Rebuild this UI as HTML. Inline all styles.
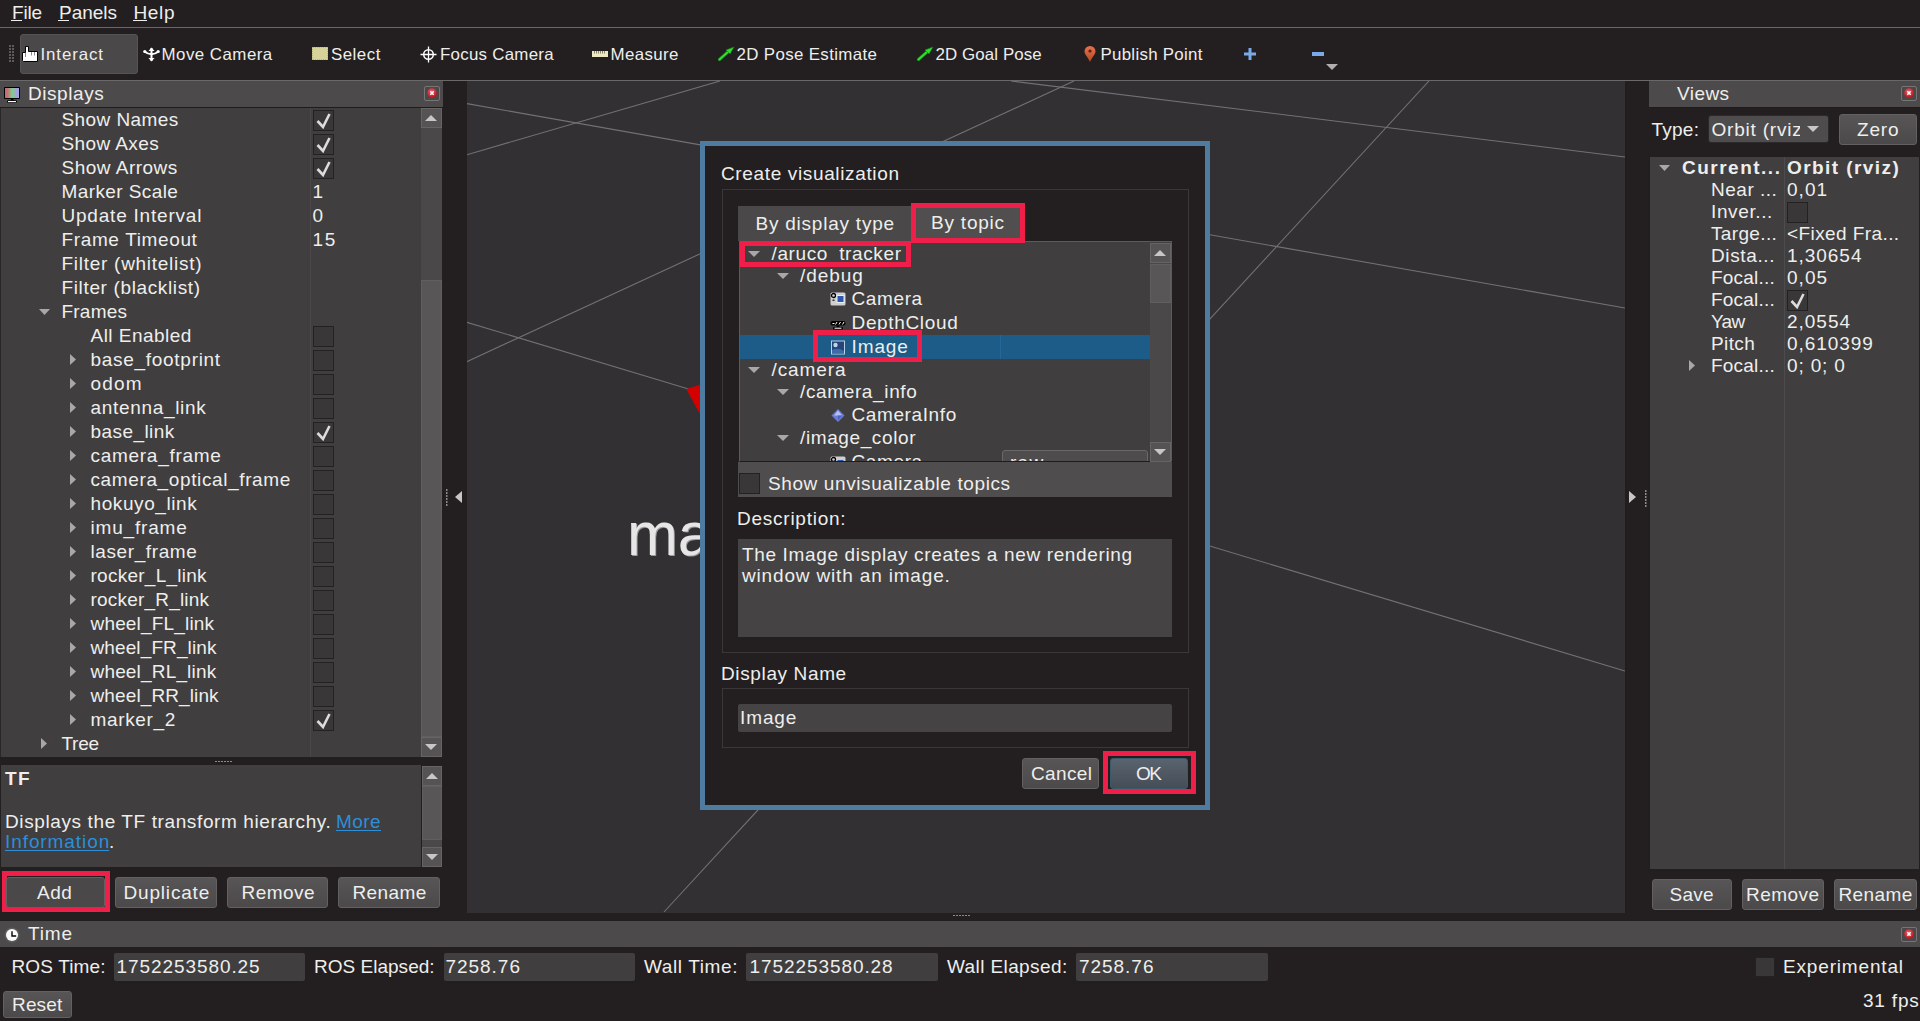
<!DOCTYPE html><html><head><meta charset="utf-8"><style>
html,body{margin:0;padding:0;}
body{width:1920px;height:1021px;overflow:hidden;position:relative;background:#231f20;}
.r{position:absolute;display:block;}
.t{position:absolute;font:19px/20px "Liberation Sans",sans-serif;white-space:pre;color:#eeeeec;}
.b{font-weight:bold;}
u{text-decoration:none;border-bottom:1px solid currentColor;}
</style></head><body>

<div class="t" style="left:12.0px;top:3.0px;letter-spacing:-0.163px">File</div>
<div class="t" style="left:59.0px;top:3.0px;letter-spacing:-0.031px">Panels</div>
<div class="t" style="left:133.5px;top:3.0px;letter-spacing:0.652px">Help</div>
<div class="r" style="left:11px;top:20px;width:11px;height:1px;background:#eeeeec"></div>
<div class="r" style="left:58px;top:20px;width:11px;height:1px;background:#eeeeec"></div>
<div class="r" style="left:133px;top:20px;width:14px;height:1px;background:#eeeeec"></div>
<div class="r" style="left:0px;top:27px;width:1920px;height:1px;background:#6a6869"></div>
<div class="r" style="left:0px;top:80px;width:1920px;height:1px;background:#6a6869"></div>
<svg class="r" style="left:9px;top:45px;" width="5" height="18" viewBox="0 0 5 18"><rect x="0" y="0" width="2" height="2" fill="#5d5a5b"/><rect x="0" y="3" width="2" height="2" fill="#5d5a5b"/><rect x="0" y="6" width="2" height="2" fill="#5d5a5b"/><rect x="0" y="9" width="2" height="2" fill="#5d5a5b"/><rect x="0" y="12" width="2" height="2" fill="#5d5a5b"/><rect x="0" y="15" width="2" height="2" fill="#5d5a5b"/><rect x="3" y="0" width="2" height="2" fill="#5d5a5b"/><rect x="3" y="3" width="2" height="2" fill="#5d5a5b"/><rect x="3" y="6" width="2" height="2" fill="#5d5a5b"/><rect x="3" y="9" width="2" height="2" fill="#5d5a5b"/><rect x="3" y="12" width="2" height="2" fill="#5d5a5b"/><rect x="3" y="15" width="2" height="2" fill="#5d5a5b"/></svg>
<div class="r" style="left:20px;top:34px;width:118px;height:40px;background:#4a4849;box-sizing:border-box;border:1px solid #555354;border-radius:3px"></div>
<svg class="r" style="left:22px;top:45px;" width="17" height="18" viewBox="0 0 17 18"><path d="M0.5 7.5 H3.5 V1.5 H6.5 V6.5 H15.5 V16.5 H1.5 L0.5 15.5 Z" fill="#fff" stroke="#000" stroke-width="1"/><path d="M9.5 7 V10.5 M12.5 7 V10.5 M3.5 8 V12" stroke="#8a8a8a" stroke-width="1"/></svg>
<div class="t" style="left:40.5px;top:45.0px;letter-spacing:0.876px;font-size:16.89px">Interact</div>
<svg class="r" style="left:143px;top:47px;" width="17" height="15" viewBox="0 0 17 15"><path d="M8.5 1 v13" stroke="#fff" stroke-width="2"/><path d="M5.5 4 L8.5 0.5 L11.5 4 z M5.5 11 L8.5 14.5 L11.5 11 z" fill="#fff"/><path d="M1.5 4.5 Q8.5 10 15.5 4.5" stroke="#fff" stroke-width="2" fill="none"/><circle cx="1.8" cy="4.5" r="1.6" fill="#fff"/><circle cx="15.2" cy="4.5" r="1.6" fill="#fff"/></svg>
<div class="t" style="left:161.5px;top:45.0px;letter-spacing:0.478px;font-size:16.89px">Move Camera</div>
<div class="r" style="left:312px;top:47px;width:16px;height:13px;background:#d6d29a;box-sizing:border-box;border:1px dotted #b8b47a"></div>
<div class="t" style="left:331.0px;top:45.0px;letter-spacing:0.487px;font-size:16.89px">Select</div>
<svg class="r" style="left:420px;top:46px;" width="17" height="17" viewBox="0 0 17 17"><circle cx="8.5" cy="8.5" r="4.8" fill="none" stroke="#fff" stroke-width="1.5"/><path d="M8.5 0.5 v16 M0.5 8.5 h16" stroke="#fff" stroke-width="1.3"/></svg>
<div class="t" style="left:440.0px;top:45.0px;letter-spacing:0.262px;font-size:16.89px">Focus Camera</div>
<svg class="r" style="left:592px;top:51px;" width="16" height="6" viewBox="0 0 16 6"><rect x="0" y="0" width="16" height="6" fill="#ede7c2"/><rect x="2" y="0" width="1" height="2.5" fill="#8c8670"/><rect x="4" y="0" width="1" height="2.5" fill="#8c8670"/><rect x="6" y="0" width="1" height="2.5" fill="#8c8670"/><rect x="8" y="0" width="1" height="2.5" fill="#8c8670"/><rect x="10" y="0" width="1" height="2.5" fill="#8c8670"/><rect x="12" y="0" width="1" height="2.5" fill="#8c8670"/></svg>
<div class="t" style="left:610.5px;top:45.0px;letter-spacing:0.388px;font-size:16.89px">Measure</div>
<svg class="r" style="left:718px;top:46px;" width="17" height="15" viewBox="0 0 17 15"><path d="M1.5 13.5 L11 5" stroke="#1a7a1a" stroke-width="3.2" stroke-linecap="round"/><path d="M1.5 13.5 L11 5" stroke="#2ee02e" stroke-width="2" stroke-linecap="round"/><path d="M16 1 L8 4 L12 8 z" fill="#2ee02e" stroke="#1a7a1a" stroke-width="0.6"/></svg>
<div class="t" style="left:736.5px;top:45.0px;letter-spacing:0.356px;font-size:16.89px">2D Pose Estimate</div>
<svg class="r" style="left:917px;top:46px;" width="17" height="15" viewBox="0 0 17 15"><path d="M1.5 13.5 L11 5" stroke="#1a7a1a" stroke-width="3.2" stroke-linecap="round"/><path d="M1.5 13.5 L11 5" stroke="#2ee02e" stroke-width="2" stroke-linecap="round"/><path d="M16 1 L8 4 L12 8 z" fill="#2ee02e" stroke="#1a7a1a" stroke-width="0.6"/></svg>
<div class="t" style="left:935.5px;top:45.0px;letter-spacing:0.101px;font-size:16.89px">2D Goal Pose</div>
<svg class="r" style="left:1084px;top:46px;" width="12" height="17" viewBox="0 0 12 17"><defs><linearGradient id="pg" x1="0" y1="0" x2="0" y2="1"><stop offset="0" stop-color="#e87050"/><stop offset="1" stop-color="#b04a20"/></linearGradient></defs><path d="M6 16 C4 11 0.5 8.5 0.5 5.5 A5.5 5.5 0 0 1 11.5 5.5 C11.5 8.5 8 11 6 16 z" fill="url(#pg)"/><circle cx="6" cy="5" r="1.6" fill="#5a2010"/></svg>
<div class="t" style="left:1100.5px;top:45.0px;letter-spacing:0.279px;font-size:16.89px">Publish Point</div>
<svg class="r" style="left:1243px;top:47px;" width="14" height="14" viewBox="0 0 14 14"><path d="M7 1 v12 M1 7 h12" stroke="#79a9e6" stroke-width="3"/></svg>
<div class="r" style="left:1312px;top:52px;width:12px;height:4px;background:#79a9e6"></div>
<svg class="r" style="left:1326px;top:64px;" width="12" height="6" viewBox="0 0 12 6"><polygon points="0,0 12,0 6,6" fill="#b0aeaf"/></svg>
<div class="r" style="left:0px;top:81px;width:443px;height:26px;background:#4d4a4b"></div>
<div class="r" style="left:0px;top:107px;width:443px;height:1px;background:#1f1c1d"></div>
<svg class="r" style="left:3px;top:86px;" width="18" height="18" viewBox="0 0 18 18"><defs><linearGradient id="mg" x1="0" y1="0" x2="1" y2="0"><stop offset="0.15" stop-color="#c86a78"/><stop offset="0.5" stop-color="#82cc82"/><stop offset="0.85" stop-color="#a4a0e4"/></linearGradient></defs><rect x="1" y="1" width="16" height="12" rx="1" fill="#000"/><rect x="2" y="2" width="14" height="10" fill="url(#mg)"/><rect x="8" y="13" width="2.5" height="1.5" fill="#000"/><rect x="4" y="14.2" width="10" height="2.8" rx="1.4" fill="#000"/><rect x="5" y="15" width="8" height="1.2" fill="#fff"/></svg>
<div class="t" style="left:28.0px;top:84.0px;letter-spacing:0.560px">Displays</div>
<div class="r" style="left:424px;top:86px;width:16px;height:15px;background:#4a4849;box-sizing:border-box;border:1px solid #767475;border-radius:2px"></div>
<svg class="r" style="left:424px;top:86px;" width="16" height="15" viewBox="0 0 16 15"><defs><radialGradient id="cg" cx="0.45" cy="0.35" r="0.7"><stop offset="0" stop-color="#e8606a"/><stop offset="1" stop-color="#b80c14"/></radialGradient></defs><circle cx="8" cy="7" r="4.8" fill="url(#cg)"/><path d="M6.3 5.3 L9.7 8.7 M9.7 5.3 L6.3 8.7" stroke="#fff" stroke-width="1.5"/></svg>
<div class="r" style="left:0px;top:108px;width:421px;height:649px;background:#403e3f"></div>
<div class="r" style="left:0px;top:108px;width:1px;height:649px;background:#2a2728"></div>
<div class="r" style="left:310px;top:108px;width:1px;height:649px;background:#4a4849"></div>
<div class="t" style="left:61.5px;top:110.0px;letter-spacing:0.420px">Show Names</div>
<div class="r" style="left:313px;top:110px;width:21px;height:21px;background:#393738;box-sizing:border-box;border:1px solid #242122"></div>
<svg class="r" style="left:313px;top:110px;" width="21" height="21" viewBox="0 0 21 21"><polyline points="4.5,11 10,17 16.5,4" fill="none" stroke="#dcdcdc" stroke-width="2.6" stroke-linejoin="miter"/></svg>
<div class="t" style="left:61.5px;top:134.0px;letter-spacing:0.395px">Show Axes</div>
<div class="r" style="left:313px;top:134px;width:21px;height:21px;background:#393738;box-sizing:border-box;border:1px solid #242122"></div>
<svg class="r" style="left:313px;top:134px;" width="21" height="21" viewBox="0 0 21 21"><polyline points="4.5,11 10,17 16.5,4" fill="none" stroke="#dcdcdc" stroke-width="2.6" stroke-linejoin="miter"/></svg>
<div class="t" style="left:61.5px;top:158.0px;letter-spacing:0.494px">Show Arrows</div>
<div class="r" style="left:313px;top:158px;width:21px;height:21px;background:#393738;box-sizing:border-box;border:1px solid #242122"></div>
<svg class="r" style="left:313px;top:158px;" width="21" height="21" viewBox="0 0 21 21"><polyline points="4.5,11 10,17 16.5,4" fill="none" stroke="#dcdcdc" stroke-width="2.6" stroke-linejoin="miter"/></svg>
<div class="t" style="left:61.5px;top:182.0px;letter-spacing:0.405px">Marker Scale</div>
<div class="t" style="left:312.5px;top:182.0px;letter-spacing:0.000px">1</div>
<div class="t" style="left:61.5px;top:206.0px;letter-spacing:0.787px">Update Interval</div>
<div class="t" style="left:312.5px;top:206.0px;letter-spacing:0.000px">0</div>
<div class="t" style="left:61.5px;top:230.0px;letter-spacing:0.634px">Frame Timeout</div>
<div class="t" style="left:312.5px;top:230.0px;letter-spacing:1.775px">15</div>
<div class="t" style="left:61.5px;top:254.0px;letter-spacing:0.725px">Filter (whitelist)</div>
<div class="t" style="left:61.5px;top:278.0px;letter-spacing:0.637px">Filter (blacklist)</div>
<div class="t" style="left:61.5px;top:302.0px;letter-spacing:0.216px">Frames</div>
<svg class="r" style="left:39px;top:309px;" width="11" height="6" viewBox="0 0 11 6"><polygon points="0,0 11,0 5.5,6" fill="#a9a7a8"/></svg>
<div class="t" style="left:90.5px;top:326.0px;letter-spacing:0.465px">All Enabled</div>
<div class="r" style="left:313px;top:326px;width:21px;height:21px;background:#393738;box-sizing:border-box;border:1px solid #242122"></div>
<div class="t" style="left:90.5px;top:350.0px;letter-spacing:0.710px">base_footprint</div>
<div class="r" style="left:313px;top:350px;width:21px;height:21px;background:#393738;box-sizing:border-box;border:1px solid #242122"></div>
<svg class="r" style="left:70px;top:354px;" width="6" height="11" viewBox="0 0 6 11"><polygon points="0,0 6,5.5 0,11" fill="#a9a7a8"/></svg>
<div class="t" style="left:90.5px;top:374.0px;letter-spacing:1.154px">odom</div>
<div class="r" style="left:313px;top:374px;width:21px;height:21px;background:#393738;box-sizing:border-box;border:1px solid #242122"></div>
<svg class="r" style="left:70px;top:378px;" width="6" height="11" viewBox="0 0 6 11"><polygon points="0,0 6,5.5 0,11" fill="#a9a7a8"/></svg>
<div class="t" style="left:90.5px;top:398.0px;letter-spacing:0.682px">antenna_link</div>
<div class="r" style="left:313px;top:398px;width:21px;height:21px;background:#393738;box-sizing:border-box;border:1px solid #242122"></div>
<svg class="r" style="left:70px;top:402px;" width="6" height="11" viewBox="0 0 6 11"><polygon points="0,0 6,5.5 0,11" fill="#a9a7a8"/></svg>
<div class="t" style="left:90.5px;top:422.0px;letter-spacing:0.433px">base_link</div>
<div class="r" style="left:313px;top:422px;width:21px;height:21px;background:#393738;box-sizing:border-box;border:1px solid #242122"></div>
<svg class="r" style="left:313px;top:422px;" width="21" height="21" viewBox="0 0 21 21"><polyline points="4.5,11 10,17 16.5,4" fill="none" stroke="#dcdcdc" stroke-width="2.6" stroke-linejoin="miter"/></svg>
<svg class="r" style="left:70px;top:426px;" width="6" height="11" viewBox="0 0 6 11"><polygon points="0,0 6,5.5 0,11" fill="#a9a7a8"/></svg>
<div class="t" style="left:90.5px;top:446.0px;letter-spacing:0.716px">camera_frame</div>
<div class="r" style="left:313px;top:446px;width:21px;height:21px;background:#393738;box-sizing:border-box;border:1px solid #242122"></div>
<svg class="r" style="left:70px;top:450px;" width="6" height="11" viewBox="0 0 6 11"><polygon points="0,0 6,5.5 0,11" fill="#a9a7a8"/></svg>
<div class="t" style="left:90.5px;top:470.0px;letter-spacing:0.622px">camera_optical_frame</div>
<div class="r" style="left:313px;top:470px;width:21px;height:21px;background:#393738;box-sizing:border-box;border:1px solid #242122"></div>
<svg class="r" style="left:70px;top:474px;" width="6" height="11" viewBox="0 0 6 11"><polygon points="0,0 6,5.5 0,11" fill="#a9a7a8"/></svg>
<div class="t" style="left:90.5px;top:494.0px;letter-spacing:0.587px">hokuyo_link</div>
<div class="r" style="left:313px;top:494px;width:21px;height:21px;background:#393738;box-sizing:border-box;border:1px solid #242122"></div>
<svg class="r" style="left:70px;top:498px;" width="6" height="11" viewBox="0 0 6 11"><polygon points="0,0 6,5.5 0,11" fill="#a9a7a8"/></svg>
<div class="t" style="left:90.5px;top:518.0px;letter-spacing:0.823px">imu_frame</div>
<div class="r" style="left:313px;top:518px;width:21px;height:21px;background:#393738;box-sizing:border-box;border:1px solid #242122"></div>
<svg class="r" style="left:70px;top:522px;" width="6" height="11" viewBox="0 0 6 11"><polygon points="0,0 6,5.5 0,11" fill="#a9a7a8"/></svg>
<div class="t" style="left:90.5px;top:542.0px;letter-spacing:0.597px">laser_frame</div>
<div class="r" style="left:313px;top:542px;width:21px;height:21px;background:#393738;box-sizing:border-box;border:1px solid #242122"></div>
<svg class="r" style="left:70px;top:546px;" width="6" height="11" viewBox="0 0 6 11"><polygon points="0,0 6,5.5 0,11" fill="#a9a7a8"/></svg>
<div class="t" style="left:90.5px;top:566.0px;letter-spacing:0.255px">rocker_L_link</div>
<div class="r" style="left:313px;top:566px;width:21px;height:21px;background:#393738;box-sizing:border-box;border:1px solid #242122"></div>
<svg class="r" style="left:70px;top:570px;" width="6" height="11" viewBox="0 0 6 11"><polygon points="0,0 6,5.5 0,11" fill="#a9a7a8"/></svg>
<div class="t" style="left:90.5px;top:590.0px;letter-spacing:0.197px">rocker_R_link</div>
<div class="r" style="left:313px;top:590px;width:21px;height:21px;background:#393738;box-sizing:border-box;border:1px solid #242122"></div>
<svg class="r" style="left:70px;top:594px;" width="6" height="11" viewBox="0 0 6 11"><polygon points="0,0 6,5.5 0,11" fill="#a9a7a8"/></svg>
<div class="t" style="left:90.5px;top:614.0px;letter-spacing:0.171px">wheel_FL_link</div>
<div class="r" style="left:313px;top:614px;width:21px;height:21px;background:#393738;box-sizing:border-box;border:1px solid #242122"></div>
<svg class="r" style="left:70px;top:618px;" width="6" height="11" viewBox="0 0 6 11"><polygon points="0,0 6,5.5 0,11" fill="#a9a7a8"/></svg>
<div class="t" style="left:90.5px;top:638.0px;letter-spacing:0.113px">wheel_FR_link</div>
<div class="r" style="left:313px;top:638px;width:21px;height:21px;background:#393738;box-sizing:border-box;border:1px solid #242122"></div>
<svg class="r" style="left:70px;top:642px;" width="6" height="11" viewBox="0 0 6 11"><polygon points="0,0 6,5.5 0,11" fill="#a9a7a8"/></svg>
<div class="t" style="left:90.5px;top:662.0px;letter-spacing:0.173px">wheel_RL_link</div>
<div class="r" style="left:313px;top:662px;width:21px;height:21px;background:#393738;box-sizing:border-box;border:1px solid #242122"></div>
<svg class="r" style="left:70px;top:666px;" width="6" height="11" viewBox="0 0 6 11"><polygon points="0,0 6,5.5 0,11" fill="#a9a7a8"/></svg>
<div class="t" style="left:90.5px;top:686.0px;letter-spacing:0.115px">wheel_RR_link</div>
<div class="r" style="left:313px;top:686px;width:21px;height:21px;background:#393738;box-sizing:border-box;border:1px solid #242122"></div>
<svg class="r" style="left:70px;top:690px;" width="6" height="11" viewBox="0 0 6 11"><polygon points="0,0 6,5.5 0,11" fill="#a9a7a8"/></svg>
<div class="t" style="left:90.5px;top:710.0px;letter-spacing:0.635px">marker_2</div>
<div class="r" style="left:313px;top:710px;width:21px;height:21px;background:#393738;box-sizing:border-box;border:1px solid #242122"></div>
<svg class="r" style="left:313px;top:710px;" width="21" height="21" viewBox="0 0 21 21"><polyline points="4.5,11 10,17 16.5,4" fill="none" stroke="#dcdcdc" stroke-width="2.6" stroke-linejoin="miter"/></svg>
<svg class="r" style="left:70px;top:714px;" width="6" height="11" viewBox="0 0 6 11"><polygon points="0,0 6,5.5 0,11" fill="#a9a7a8"/></svg>
<div class="t" style="left:61.5px;top:734.0px;letter-spacing:-0.276px">Tree</div>
<svg class="r" style="left:41px;top:738px;" width="6" height="11" viewBox="0 0 6 11"><polygon points="0,0 6,5.5 0,11" fill="#a9a7a8"/></svg>
<div class="r" style="left:421px;top:108px;width:21px;height:649px;background:#4a4849"></div>
<div class="r" style="left:421px;top:108px;width:21px;height:20px;background:#555354;box-sizing:border-box;border:1px solid #666465"></div>
<svg class="r" style="left:425px;top:115px;" width="12" height="6" viewBox="0 0 12 6"><polygon points="0,6 12,6 6.0,0" fill="#c8c6c7"/></svg>
<div class="r" style="left:421px;top:737px;width:21px;height:20px;background:#555354;box-sizing:border-box;border:1px solid #666465"></div>
<svg class="r" style="left:425px;top:744px;" width="12" height="6" viewBox="0 0 12 6"><polygon points="0,0 12,0 6.0,6" fill="#c8c6c7"/></svg>
<div class="r" style="left:421px;top:280px;width:21px;height:457px;background:#585657;box-sizing:border-box;border:1px solid #605e5f"></div>
<svg class="r" style="left:215px;top:761px;" width="18" height="2" viewBox="0 0 18 2"><rect x="0" y="0" width="2" height="1" fill="#8c8a8b"/><rect x="3" y="0" width="2" height="1" fill="#8c8a8b"/><rect x="6" y="0" width="2" height="1" fill="#8c8a8b"/><rect x="9" y="0" width="2" height="1" fill="#8c8a8b"/><rect x="12" y="0" width="2" height="1" fill="#8c8a8b"/><rect x="15" y="0" width="2" height="1" fill="#8c8a8b"/></svg>
<div class="r" style="left:1px;top:765px;width:420px;height:102px;background:#403e3f"></div>
<div class="t b" style="left:5.0px;top:769.0px;letter-spacing:1.368px">TF</div>
<div class="t" style="left:5.0px;top:812.0px;letter-spacing:0.611px">Displays the TF transform hierarchy.</div>
<div class="t" style="left:336.0px;top:812.0px;letter-spacing:0.452px;color:#2b8fdb">More</div>
<div class="r" style="left:336px;top:830px;width:45px;height:1px;background:#2b8fdb"></div>
<div class="t" style="left:5.0px;top:832.0px;letter-spacing:0.918px;color:#2b8fdb">Information</div>
<div class="r" style="left:5px;top:850px;width:104px;height:1px;background:#2b8fdb"></div>
<div class="t" style="left:109.0px;top:832.0px;letter-spacing:0.000px">.</div>
<div class="r" style="left:422px;top:766px;width:20px;height:101px;background:#4a4849"></div>
<div class="r" style="left:422px;top:766px;width:20px;height:20px;background:#555354;box-sizing:border-box;border:1px solid #666465"></div>
<svg class="r" style="left:426px;top:773px;" width="12" height="6" viewBox="0 0 12 6"><polygon points="0,6 12,6 6.0,0" fill="#c8c6c7"/></svg>
<div class="r" style="left:422px;top:847px;width:20px;height:20px;background:#555354;box-sizing:border-box;border:1px solid #666465"></div>
<svg class="r" style="left:426px;top:854px;" width="12" height="6" viewBox="0 0 12 6"><polygon points="0,0 12,0 6.0,6" fill="#c8c6c7"/></svg>
<div class="r" style="left:422px;top:786px;width:20px;height:54px;background:#585657;box-sizing:border-box;border:1px solid #605e5f"></div>
<div class="r" style="left:2px;top:871px;width:108px;height:41px;box-sizing:border-box;border:5px solid #ef1f49"></div>
<div class="r" style="left:6px;top:877px;width:99px;height:31px;background:#4a4849;box-sizing:border-box;border:1px solid #626061;border-radius:3px"></div>
<div class="t" style="left:37.0px;top:883.0px;letter-spacing:0.519px">Add</div>
<div class="r" style="left:115px;top:877px;width:102px;height:31px;background:linear-gradient(#575556,#4b494a);box-sizing:border-box;border:1px solid #626061;border-radius:3px"></div>
<div class="t" style="left:123.5px;top:883.0px;letter-spacing:0.818px">Duplicate</div>
<div class="r" style="left:227px;top:877px;width:101px;height:31px;background:linear-gradient(#575556,#4b494a);box-sizing:border-box;border:1px solid #626061;border-radius:3px"></div>
<div class="t" style="left:241.5px;top:883.0px;letter-spacing:0.460px">Remove</div>
<div class="r" style="left:338px;top:877px;width:102px;height:31px;background:linear-gradient(#575556,#4b494a);box-sizing:border-box;border:1px solid #626061;border-radius:3px"></div>
<div class="t" style="left:352.5px;top:883.0px;letter-spacing:0.400px">Rename</div>
<div class="r" style="left:467px;top:81px;width:1158px;height:832px;background:#323033"></div>
<div class="r" style="left:1625px;top:81px;width:2px;height:832px;background:#211d1e"></div>
<svg class="r" style="left:467px;top:81px;overflow:hidden" width="1158" height="832" viewBox="0 0 1158 832"><line x1="-1" y1="74" x2="253" y2="0" stroke="#727174" stroke-width="1.1"/><line x1="-1" y1="22.5" x2="1158" y2="227" stroke="#727174" stroke-width="1.1"/><line x1="-1" y1="281" x2="607" y2="0" stroke="#727174" stroke-width="1.1"/><line x1="544" y1="0" x2="1158" y2="76" stroke="#727174" stroke-width="1.1"/><line x1="962" y1="0" x2="197" y2="831" stroke="#727174" stroke-width="1.1"/><line x1="-1" y1="241" x2="1158" y2="590" stroke="#727174" stroke-width="1.1"/><polygon points="219.3,308.0 234.0,303.5 234.0,335.0" fill="#d40000"/></svg>
<div class="r" style="left:627px;top:494px;font:61px/80px 'Liberation Sans',sans-serif;color:#e6e6e6;white-space:pre;text-shadow:1px 1px 0 #9a9a9a">ma</div>
<svg class="r" style="left:446px;top:489px;" width="2" height="18" viewBox="0 0 2 18"><rect x="0" y="0" width="1.5" height="2" fill="#8c8a8b"/><rect x="0" y="3" width="1.5" height="2" fill="#8c8a8b"/><rect x="0" y="6" width="1.5" height="2" fill="#8c8a8b"/><rect x="0" y="9" width="1.5" height="2" fill="#8c8a8b"/><rect x="0" y="12" width="1.5" height="2" fill="#8c8a8b"/><rect x="0" y="15" width="1.5" height="2" fill="#8c8a8b"/></svg>
<svg class="r" style="left:455px;top:491px;" width="8" height="12" viewBox="0 0 8 12"><polygon points="7,0 7,12 0,6" fill="#c8c6c7"/></svg>
<svg class="r" style="left:1629px;top:491px;" width="8" height="12" viewBox="0 0 8 12"><polygon points="0,0 0,12 7,6" fill="#c8c6c7"/></svg>
<svg class="r" style="left:1645px;top:490px;" width="2" height="18" viewBox="0 0 2 18"><rect x="0" y="0" width="1.5" height="2" fill="#8c8a8b"/><rect x="0" y="3" width="1.5" height="2" fill="#8c8a8b"/><rect x="0" y="6" width="1.5" height="2" fill="#8c8a8b"/><rect x="0" y="9" width="1.5" height="2" fill="#8c8a8b"/><rect x="0" y="12" width="1.5" height="2" fill="#8c8a8b"/><rect x="0" y="15" width="1.5" height="2" fill="#8c8a8b"/></svg>
<svg class="r" style="left:953px;top:915px;" width="18" height="2" viewBox="0 0 18 2"><rect x="0" y="0" width="2" height="1" fill="#8c8a8b"/><rect x="3" y="0" width="2" height="1" fill="#8c8a8b"/><rect x="6" y="0" width="2" height="1" fill="#8c8a8b"/><rect x="9" y="0" width="2" height="1" fill="#8c8a8b"/><rect x="12" y="0" width="2" height="1" fill="#8c8a8b"/><rect x="15" y="0" width="2" height="1" fill="#8c8a8b"/></svg>
<div class="r" style="left:1649px;top:81px;width:271px;height:26px;background:#4d4a4b"></div>
<div class="r" style="left:1649px;top:107px;width:271px;height:1px;background:#1f1c1d"></div>
<div class="t" style="left:1677.0px;top:84.0px;letter-spacing:0.439px">Views</div>
<div class="r" style="left:1901px;top:86px;width:16px;height:15px;background:#4a4849;box-sizing:border-box;border:1px solid #767475;border-radius:2px"></div>
<svg class="r" style="left:1901px;top:86px;" width="16" height="15" viewBox="0 0 16 15"><defs><radialGradient id="cg" cx="0.45" cy="0.35" r="0.7"><stop offset="0" stop-color="#e8606a"/><stop offset="1" stop-color="#b80c14"/></radialGradient></defs><circle cx="8" cy="7" r="4.8" fill="url(#cg)"/><path d="M6.3 5.3 L9.7 8.7 M9.7 5.3 L6.3 8.7" stroke="#fff" stroke-width="1.5"/></svg>
<div class="t" style="left:1651.5px;top:120.0px;letter-spacing:0.239px">Type:</div>
<div class="r" style="left:1708px;top:115px;width:121px;height:28px;background:#4e4c4d;box-sizing:border-box;border:1px solid #2c292a;border-radius:3px"></div>
<div class="r" style="left:1711px;top:115px;width:89px;height:28px;overflow:hidden">
<div class="t" style="left:0.5px;top:5.0px;letter-spacing:0.789px">Orbit (rviz)</div>
</div>
<svg class="r" style="left:1807px;top:126px;" width="12" height="6" viewBox="0 0 12 6"><polygon points="0,0 12,0 6,6" fill="#c8c6c7"/></svg>
<div class="r" style="left:1839px;top:114px;width:78px;height:31px;background:linear-gradient(#575556,#4b494a);box-sizing:border-box;border:1px solid #626061;border-radius:3px"></div>
<div class="t" style="left:1857.0px;top:120.0px;letter-spacing:0.792px">Zero</div>
<div class="r" style="left:1650px;top:157px;width:269px;height:712px;background:#403e3f"></div>
<div class="r" style="left:1784px;top:157px;width:1px;height:712px;background:#4d4b4c"></div>
<div class="t b" style="left:1682.0px;top:158.0px;letter-spacing:1.497px">Current...</div>
<div class="t b" style="left:1787.0px;top:158.0px;letter-spacing:1.435px">Orbit (rviz)</div>
<svg class="r" style="left:1659px;top:165px;" width="11" height="6" viewBox="0 0 11 6"><polygon points="0,0 11,0 5.5,6" fill="#a9a7a8"/></svg>
<div class="t" style="left:1711.0px;top:180.0px;letter-spacing:0.509px">Near ...</div>
<div class="t" style="left:1787.0px;top:180.0px;letter-spacing:1.034px">0,01</div>
<div class="t" style="left:1711.0px;top:202.0px;letter-spacing:0.619px">Inver...</div>
<div class="r" style="left:1787px;top:202px;width:21px;height:21px;background:#393738;box-sizing:border-box;border:1px solid #242122"></div>
<div class="t" style="left:1711.0px;top:224.0px;letter-spacing:0.348px">Targe...</div>
<div class="t" style="left:1787.0px;top:224.0px;letter-spacing:0.411px">&lt;Fixed Fra...</div>
<div class="t" style="left:1711.0px;top:246.0px;letter-spacing:0.623px">Dista...</div>
<div class="t" style="left:1787.0px;top:246.0px;letter-spacing:0.961px">1,30654</div>
<div class="t" style="left:1711.0px;top:268.0px;letter-spacing:0.217px">Focal...</div>
<div class="t" style="left:1787.0px;top:268.0px;letter-spacing:1.034px">0,05</div>
<div class="t" style="left:1711.0px;top:290.0px;letter-spacing:0.217px">Focal...</div>
<div class="r" style="left:1787px;top:290px;width:21px;height:21px;background:#393738;box-sizing:border-box;border:1px solid #242122"></div>
<svg class="r" style="left:1787px;top:290px;" width="21" height="21" viewBox="0 0 21 21"><polyline points="4.5,11 10,17 16.5,4" fill="none" stroke="#dcdcdc" stroke-width="2.6" stroke-linejoin="miter"/></svg>
<div class="t" style="left:1711.0px;top:312.0px;letter-spacing:-0.643px">Yaw</div>
<div class="t" style="left:1787.0px;top:312.0px;letter-spacing:0.975px">2,0554</div>
<div class="t" style="left:1711.0px;top:334.0px;letter-spacing:0.397px">Pitch</div>
<div class="t" style="left:1787.0px;top:334.0px;letter-spacing:0.950px">0,610399</div>
<div class="t" style="left:1711.0px;top:356.0px;letter-spacing:0.217px">Focal...</div>
<div class="t" style="left:1787.0px;top:356.0px;letter-spacing:0.852px">0; 0; 0</div>
<svg class="r" style="left:1689px;top:360px;" width="6" height="11" viewBox="0 0 6 11"><polygon points="0,0 6,5.5 0,11" fill="#a9a7a8"/></svg>
<div class="r" style="left:1652px;top:879px;width:80px;height:31px;background:linear-gradient(#575556,#4b494a);box-sizing:border-box;border:1px solid #626061;border-radius:3px"></div>
<div class="t" style="left:1669.5px;top:885.0px;letter-spacing:0.294px">Save</div>
<div class="r" style="left:1742px;top:879px;width:82px;height:31px;background:linear-gradient(#575556,#4b494a);box-sizing:border-box;border:1px solid #626061;border-radius:3px"></div>
<div class="t" style="left:1746.0px;top:885.0px;letter-spacing:0.460px">Remove</div>
<div class="r" style="left:1834px;top:879px;width:83px;height:31px;background:linear-gradient(#575556,#4b494a);box-sizing:border-box;border:1px solid #626061;border-radius:3px"></div>
<div class="t" style="left:1838.5px;top:885.0px;letter-spacing:0.400px">Rename</div>
<div class="r" style="left:0px;top:921px;width:1920px;height:26px;background:#4d4a4b"></div>
<svg class="r" style="left:3px;top:926px;" width="18" height="18" viewBox="0 0 18 18"><circle cx="9" cy="9" r="7.5" fill="#5e5c5d"/><circle cx="9" cy="9" r="6" fill="#fafafa"/><path d="M9 5.3 V10 H13.2" stroke="#000" stroke-width="1.4" fill="none"/></svg>
<div class="t" style="left:28.0px;top:924.0px;letter-spacing:0.849px">Time</div>
<div class="r" style="left:1901px;top:927px;width:16px;height:15px;background:#4a4849;box-sizing:border-box;border:1px solid #767475;border-radius:2px"></div>
<svg class="r" style="left:1901px;top:927px;" width="16" height="15" viewBox="0 0 16 15"><defs><radialGradient id="cg" cx="0.45" cy="0.35" r="0.7"><stop offset="0" stop-color="#e8606a"/><stop offset="1" stop-color="#b80c14"/></radialGradient></defs><circle cx="8" cy="7" r="4.8" fill="url(#cg)"/><path d="M6.3 5.3 L9.7 8.7 M9.7 5.3 L6.3 8.7" stroke="#fff" stroke-width="1.5"/></svg>
<div class="t" style="left:11.5px;top:957.0px;letter-spacing:0.130px">ROS Time:</div>
<div class="r" style="left:114px;top:953px;width:191px;height:28px;background:#403e3f;border-radius:2px"></div>
<div class="t" style="left:116.5px;top:957.0px;letter-spacing:0.924px">1752253580.25</div>
<div class="t" style="left:314.0px;top:957.0px;letter-spacing:0.017px">ROS Elapsed:</div>
<div class="r" style="left:444px;top:953px;width:191px;height:28px;background:#403e3f;border-radius:2px"></div>
<div class="t" style="left:445.5px;top:957.0px;letter-spacing:0.961px">7258.76</div>
<div class="t" style="left:644.0px;top:957.0px;letter-spacing:0.617px">Wall Time:</div>
<div class="r" style="left:746px;top:953px;width:192px;height:28px;background:#403e3f;border-radius:2px"></div>
<div class="t" style="left:749.5px;top:957.0px;letter-spacing:0.924px">1752253580.28</div>
<div class="t" style="left:947.0px;top:957.0px;letter-spacing:0.392px">Wall Elapsed:</div>
<div class="r" style="left:1076px;top:953px;width:192px;height:28px;background:#403e3f;border-radius:2px"></div>
<div class="t" style="left:1079.0px;top:957.0px;letter-spacing:0.961px">7258.76</div>
<div class="r" style="left:1755px;top:957px;width:20px;height:20px;background:#393738;box-sizing:border-box;border:1px solid #242122"></div>
<div class="t" style="left:1783.0px;top:957.0px;letter-spacing:0.834px">Experimental</div>
<div class="r" style="left:3px;top:991px;width:69px;height:27px;background:linear-gradient(#575556,#4b494a);box-sizing:border-box;border:1px solid #626061;border-radius:3px"></div>
<div class="t" style="left:12.0px;top:994.5px;letter-spacing:0.162px">Reset</div>
<div class="t" style="left:1863.0px;top:991.0px;letter-spacing:0.802px">31 fps</div>
<div class="r" style="left:700px;top:141px;width:510px;height:669px;background:#231f20;box-sizing:border-box;border:5px solid #4f7ba0"></div>
<div class="t" style="left:721.0px;top:164.0px;letter-spacing:0.642px">Create visualization</div>
<div class="r" style="left:722px;top:189px;width:467px;height:464px;box-sizing:border-box;border:1px solid #3a3738"></div>
<div class="r" style="left:738px;top:206px;width:173px;height:35px;background:#4a4849"></div>
<div class="t" style="left:755.5px;top:214.0px;letter-spacing:0.770px">By display type</div>
<div class="r" style="left:911px;top:203px;width:114px;height:40px;background:#504e4f"></div>
<div class="t" style="left:931.0px;top:213.0px;letter-spacing:0.789px">By topic</div>
<div class="r" style="left:739px;top:241px;width:433px;height:221px;background:#403e3f;box-sizing:border-box;border:1px solid #5c5a5b;border-bottom-color:#1f1c1d"></div>
<div class="r" style="left:740px;top:335px;width:410px;height:24px;background:#1d5b88"></div>
<div class="r" style="left:1000px;top:335px;width:1px;height:24px;background:#24679a"></div>
<div class="t" style="left:771.5px;top:244.0px;letter-spacing:0.618px">/aruco_tracker</div>
<svg class="r" style="left:748px;top:251px;" width="12" height="6" viewBox="0 0 12 6"><polygon points="0,0 12,0 6.0,6" fill="#a9a7a8"/></svg>
<div class="t" style="left:800.0px;top:266.0px;letter-spacing:0.941px">/debug</div>
<svg class="r" style="left:777px;top:273px;" width="12" height="6" viewBox="0 0 12 6"><polygon points="0,0 12,0 6.0,6" fill="#a9a7a8"/></svg>
<div class="t" style="left:851.5px;top:289.0px;letter-spacing:0.614px">Camera</div>
<svg class="r" style="left:830px;top:292px;" width="16" height="16" viewBox="0 0 16 16"><rect x="0.5" y="0.5" width="15" height="13" rx="1.5" fill="#cfcfcf"/><circle cx="3.5" cy="3.5" r="2" fill="none" stroke="#000" stroke-width="1.3"/><rect x="2.5" y="7.5" width="2" height="1.5" fill="#333"/><rect x="6.5" y="3" width="8" height="8" fill="#e8eef8"/><rect x="7.5" y="4" width="6" height="6" fill="#2d58b0"/></svg>
<div class="t" style="left:851.5px;top:313.0px;letter-spacing:0.655px">DepthCloud</div>
<svg class="r" style="left:830px;top:316px;" width="16" height="14" viewBox="0 0 16 14"><rect x="0.5" y="5" width="15" height="4.5" rx="2" fill="#000"/><path d="M2.5 7.5 h2 M5.5 8.5 L7 6 M9 8.5 L10.5 6 M12.5 8.5 L14 6" stroke="#fff" stroke-width="1"/><rect x="6.5" y="9.5" width="3" height="1.5" fill="#000"/><rect x="3" y="11" width="10" height="2.5" rx="1" fill="#000"/><rect x="4.5" y="11.7" width="7" height="1" fill="#fff"/></svg>
<div class="t" style="left:851.5px;top:337.0px;letter-spacing:0.893px">Image</div>
<svg class="r" style="left:830px;top:340px;" width="16" height="16" viewBox="0 0 16 16"><rect x="1" y="0.5" width="14" height="14" fill="#b9cfe6"/><rect x="2" y="1.5" width="12" height="12" fill="#27457a"/><circle cx="5.5" cy="5" r="2.2" fill="#b8d8e8"/><path d="M2 13.5 L2 10 Q8 7 14 11 V13.5 z" fill="#3d6aa8"/></svg>
<div class="t" style="left:771.5px;top:360.0px;letter-spacing:0.900px">/camera</div>
<svg class="r" style="left:748px;top:367px;" width="12" height="6" viewBox="0 0 12 6"><polygon points="0,0 12,0 6.0,6" fill="#a9a7a8"/></svg>
<div class="t" style="left:800.0px;top:382.0px;letter-spacing:0.634px">/camera_info</div>
<svg class="r" style="left:777px;top:389px;" width="12" height="6" viewBox="0 0 12 6"><polygon points="0,0 12,0 6.0,6" fill="#a9a7a8"/></svg>
<div class="t" style="left:851.5px;top:405.0px;letter-spacing:0.607px">CameraInfo</div>
<svg class="r" style="left:830px;top:408px;" width="16" height="16" viewBox="0 0 16 16"><polygon points="8,1 14.5,7.5 8,14 1.5,7.5" fill="#6b7cd8"/><polygon points="8,2.5 12,7.5 8,7.5 4,7.5" fill="#b4c0f4"/><polygon points="8,7.5 12,7.5 8,12.5" fill="#5062c0"/></svg>
<div class="t" style="left:800.0px;top:428.0px;letter-spacing:0.608px">/image_color</div>
<svg class="r" style="left:777px;top:435px;" width="12" height="6" viewBox="0 0 12 6"><polygon points="0,0 12,0 6.0,6" fill="#a9a7a8"/></svg>
<div class="r" style="left:740px;top:449px;width:410px;height:12px;overflow:hidden">
<svg class="r" style="left:90px;top:7px;" width="16" height="16" viewBox="0 0 16 16"><rect x="0.5" y="0.5" width="15" height="13" rx="1.5" fill="#cfcfcf"/><circle cx="3.5" cy="3.5" r="2" fill="none" stroke="#000" stroke-width="1.3"/><rect x="7.5" y="4" width="6" height="6" fill="#2d58b0"/></svg>
<div class="t" style="left:111.5px;top:3.0px;letter-spacing:0.614px">Camera</div>
<div class="r" style="left:262px;top:1px;width:146px;height:29px;background:#4e4c4d;box-sizing:border-box;border:1px solid #6a6869;border-radius:3px"></div>
<div class="t" style="left:270.0px;top:4.0px;letter-spacing:1.271px">raw</div>
</div>
<div class="r" style="left:1150px;top:243px;width:21px;height:219px;background:#4a4849"></div>
<div class="r" style="left:1150px;top:243px;width:21px;height:20px;background:#555354;box-sizing:border-box;border:1px solid #666465"></div>
<svg class="r" style="left:1154px;top:250px;" width="12" height="6" viewBox="0 0 12 6"><polygon points="0,6 12,6 6.0,0" fill="#c8c6c7"/></svg>
<div class="r" style="left:1150px;top:442px;width:21px;height:20px;background:#555354;box-sizing:border-box;border:1px solid #666465"></div>
<svg class="r" style="left:1154px;top:449px;" width="12" height="6" viewBox="0 0 12 6"><polygon points="0,0 12,0 6.0,6" fill="#c8c6c7"/></svg>
<div class="r" style="left:1150px;top:264px;width:21px;height:39px;background:#585657;box-sizing:border-box;border:1px solid #605e5f"></div>
<div class="r" style="left:738px;top:462px;width:434px;height:35px;background:#4f4d4e"></div>
<div class="r" style="left:739px;top:473px;width:21px;height:21px;background:#393738;box-sizing:border-box;border:1px solid #242122"></div>
<div class="t" style="left:768.0px;top:473.5px;letter-spacing:0.599px">Show unvisualizable topics</div>
<div class="t" style="left:737.0px;top:509.0px;letter-spacing:0.752px">Description:</div>
<div class="r" style="left:738px;top:539px;width:434px;height:98px;background:#454344"></div>
<div class="t" style="left:742.0px;top:544.5px;letter-spacing:0.643px">The Image display creates a new rendering</div>
<div class="t" style="left:742.0px;top:565.5px;letter-spacing:0.835px">window with an image.</div>
<div class="t" style="left:721.0px;top:664.0px;letter-spacing:0.629px">Display Name</div>
<div class="r" style="left:722px;top:688px;width:467px;height:60px;box-sizing:border-box;border:1px solid #3a3738"></div>
<div class="r" style="left:738px;top:704px;width:434px;height:28px;background:#454344;border-radius:2px"></div>
<div class="t" style="left:740.0px;top:708.0px;letter-spacing:0.893px">Image</div>
<div class="r" style="left:1022px;top:758px;width:77px;height:31px;background:linear-gradient(#575556,#4b494a);box-sizing:border-box;border:1px solid #626061;border-radius:3px"></div>
<div class="t" style="left:1031.0px;top:764.0px;letter-spacing:0.366px">Cancel</div>
<div class="r" style="left:1103px;top:751px;width:93px;height:43px;box-sizing:border-box;border:5px solid #ef1f49"></div>
<div class="r" style="left:1110px;top:758px;width:78px;height:31px;background:linear-gradient(#5a646e,#454d57);box-sizing:border-box;border:1px solid #3b5a6b;border-radius:3px"></div>
<div class="t" style="left:1136.0px;top:764.0px;letter-spacing:-1.483px">OK</div>
<div class="r" style="left:911px;top:203px;width:114px;height:40px;box-sizing:border-box;border:5px solid #ef1f49"></div>
<div class="r" style="left:740px;top:241px;width:171px;height:26px;box-sizing:border-box;border:5px solid #ef1f49"></div>
<div class="r" style="left:813px;top:330px;width:109px;height:32px;box-sizing:border-box;border:5px solid #ef1f49"></div>
</body></html>
